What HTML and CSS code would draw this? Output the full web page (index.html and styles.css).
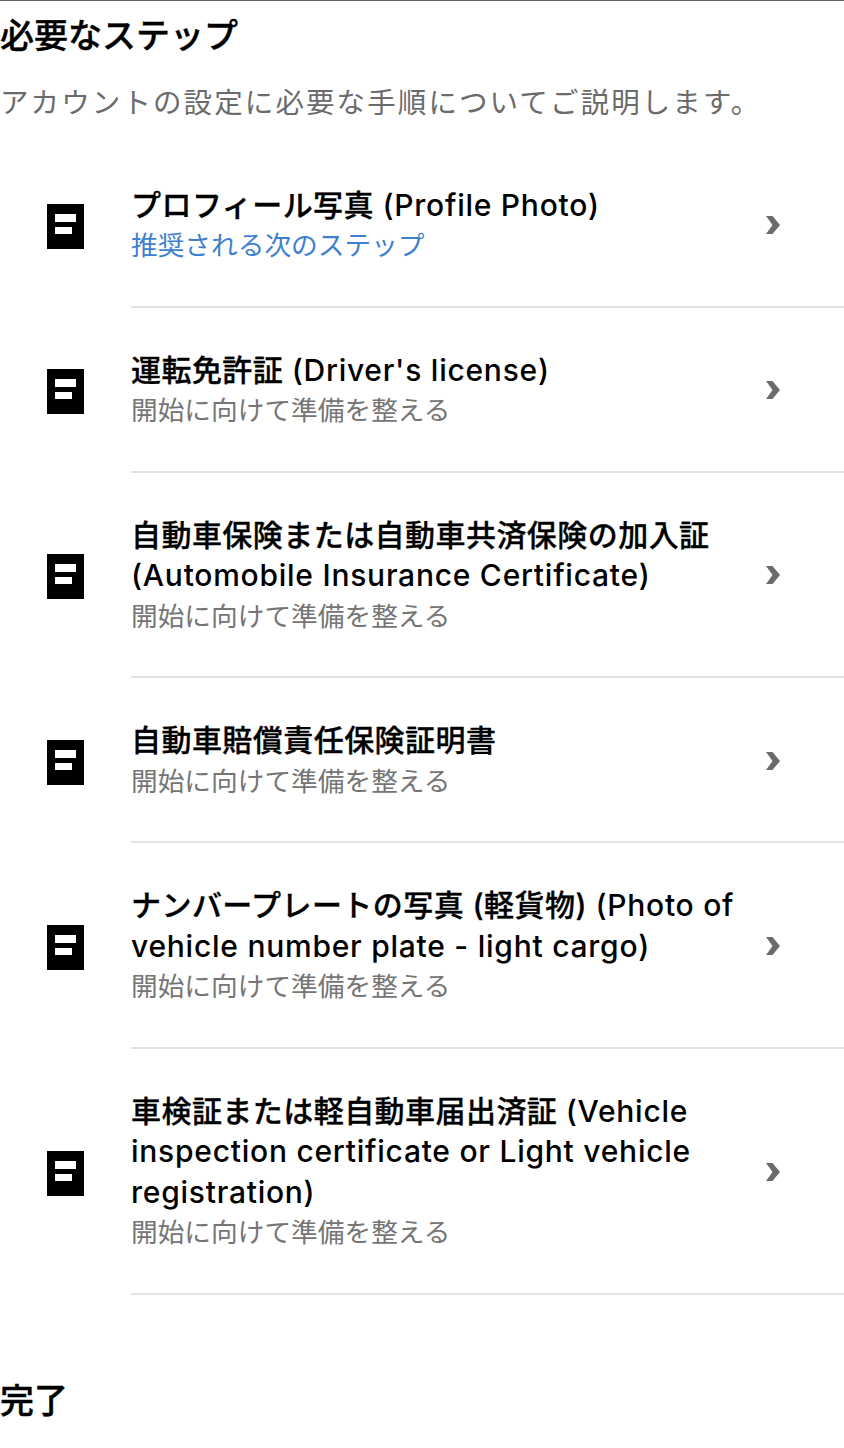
FILE: index.html
```html
<!DOCTYPE html>
<html lang="ja">
<head>
  <meta charset="UTF-8">
  <title>必要なステップ</title>
  <link rel="stylesheet" href="styles.css">
</head>
<body>
  <h2 class="section-title">必要なステップ</h2>
  <p class="section-desc">アカウントの設定に必要な手順についてご説明します。</p>

  <ul class="steps">
    <li class="step">
      <svg class="step-icon" viewBox="0 0 37 45"><path fill-rule="evenodd" d="M0 0H37V45H0ZM8 10V18H29V10ZM8 23V30H25V23Z"/></svg>
      <div class="step-body">
        <div class="step-title">プロフィール写真 <span class="latin">(Profile Photo)</span></div>
        <div class="step-sub step-sub-next">推奨される次のステップ</div>
      </div>
      <svg class="step-arrow" viewBox="0 0 14 18"><path d="M0 0H6.500L14 9L6.500 18H0L6.500 9Z"/></svg>
    </li>
    <li class="step">
      <svg class="step-icon" viewBox="0 0 37 45"><path fill-rule="evenodd" d="M0 0H37V45H0ZM8 10V18H29V10ZM8 23V30H25V23Z"/></svg>
      <div class="step-body">
        <div class="step-title">運転免許証 <span class="latin">(Driver's license)</span></div>
        <div class="step-sub">開始に向けて準備を整える</div>
      </div>
      <svg class="step-arrow" viewBox="0 0 14 18"><path d="M0 0H6.500L14 9L6.500 18H0L6.500 9Z"/></svg>
    </li>
    <li class="step">
      <svg class="step-icon" viewBox="0 0 37 45"><path fill-rule="evenodd" d="M0 0H37V45H0ZM8 10V18H29V10ZM8 23V30H25V23Z"/></svg>
      <div class="step-body">
        <div class="step-title">自動車保険または自動車共済保険の加入証 <span class="latin">(Automobile Insurance Certificate)</span></div>
        <div class="step-sub">開始に向けて準備を整える</div>
      </div>
      <svg class="step-arrow" viewBox="0 0 14 18"><path d="M0 0H6.500L14 9L6.500 18H0L6.500 9Z"/></svg>
    </li>
    <li class="step">
      <svg class="step-icon" viewBox="0 0 37 45"><path fill-rule="evenodd" d="M0 0H37V45H0ZM8 10V18H29V10ZM8 23V30H25V23Z"/></svg>
      <div class="step-body">
        <div class="step-title">自動車賠償責任保険証明書</div>
        <div class="step-sub">開始に向けて準備を整える</div>
      </div>
      <svg class="step-arrow" viewBox="0 0 14 18"><path d="M0 0H6.500L14 9L6.500 18H0L6.500 9Z"/></svg>
    </li>
    <li class="step">
      <svg class="step-icon" viewBox="0 0 37 45"><path fill-rule="evenodd" d="M0 0H37V45H0ZM8 10V18H29V10ZM8 23V30H25V23Z"/></svg>
      <div class="step-body">
        <div class="step-title">ナンバープレートの写真 (軽貨物) <span class="latin">(Photo of</span> <span class="latin">vehicle number plate - light cargo)</span></div>
        <div class="step-sub">開始に向けて準備を整える</div>
      </div>
      <svg class="step-arrow" viewBox="0 0 14 18"><path d="M0 0H6.500L14 9L6.500 18H0L6.500 9Z"/></svg>
    </li>
    <li class="step">
      <svg class="step-icon" viewBox="0 0 37 45"><path fill-rule="evenodd" d="M0 0H37V45H0ZM8 10V18H29V10ZM8 23V30H25V23Z"/></svg>
      <div class="step-body">
        <div class="step-title">車検証または軽自動車届出済証 <span class="latin">(Vehicle</span> <span class="latin">inspection certificate or Light vehicle registration)</span></div>
        <div class="step-sub">開始に向けて準備を整える</div>
      </div>
      <svg class="step-arrow" viewBox="0 0 14 18"><path d="M0 0H6.500L14 9L6.500 18H0L6.500 9Z"/></svg>
    </li>
  </ul>

  <h2 class="section-title section-title-done">完了</h2>
</body>
</html>
```

FILE: styles.css
```css
body {
  margin: 0;
  background: #fff;
  color: #000;
  font-family: "Inter", "Noto Sans CJK JP", sans-serif;
  border-top: 1px solid #5f5f5f;
  overflow: hidden;
}

.section-title {
  margin: 0;
  padding-top: 14px;
  font-size: 34px;
  line-height: 41px;
  font-weight: 500;
  -webkit-text-stroke: 0.4px #000;
}

.section-title-done {
  padding-top: 85px;
}

.section-desc {
  margin: 0;
  padding-top: 26px;
  font-size: 28.500px;
  line-height: 41px;
  letter-spacing: 2.100px;
  color: #6b6b6b;
}

/* Step rows */
.steps {
  list-style: none;
  margin: 0;
  padding: 19.500px 0 0;
}

.step {
  display: flex;
  align-items: center;
  padding-left: 47px;
}

.step-icon {
  width: 37px;
  height: 45px;
  flex: none;
  margin-top: 3px;
  margin-right: 47px;
}

.step-body {
  flex: 1;
  padding: 42px 100px 40.600px 0;
  border-bottom: 2px solid #e2e2e2;
  min-width: 0;
}

.step-title {
  font-size: 30px;
  line-height: 40.500px;
  font-weight: 500;
  letter-spacing: 0.450px;
  -webkit-text-stroke: 0.3px #000;
}

.latin {
  letter-spacing: 0.750px;
  -webkit-text-stroke: 0;
}

.step-sub {
  font-size: 26.700px;
  line-height: 40px;
  color: #757575;
}

.step-sub-next {
  color: #3f7fd0;
}

.step-arrow {
  width: 14px;
  height: 18px;
  flex: none;
  margin-left: -78px;
  margin-right: 64px;
  fill: #6b6b6b;
}
```
